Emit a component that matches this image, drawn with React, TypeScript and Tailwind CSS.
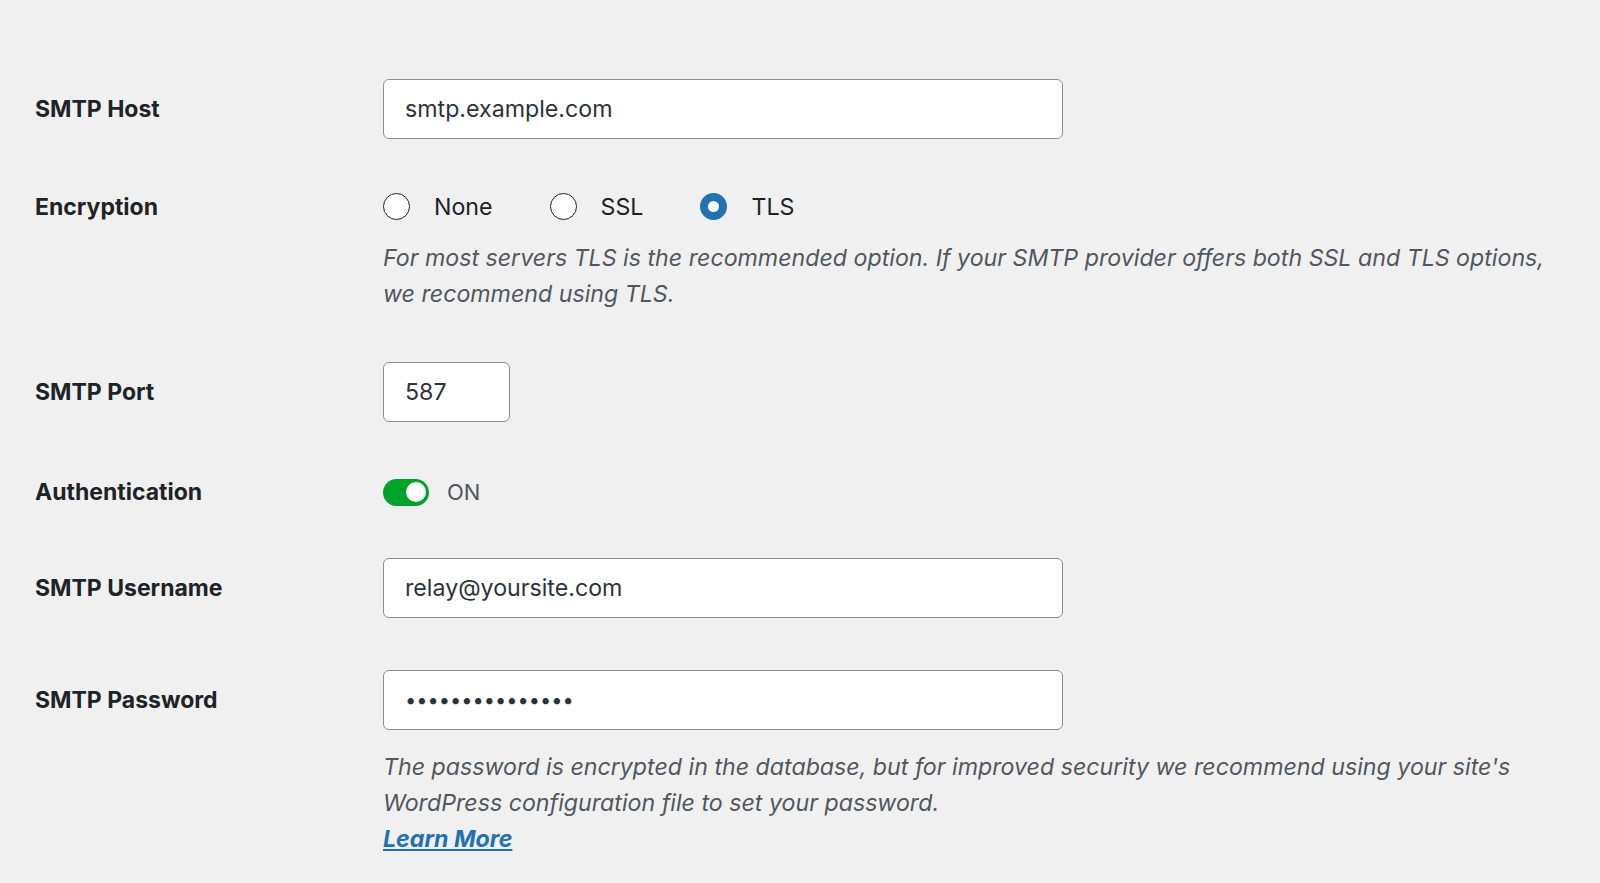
import { useState } from 'react';

type Enc = 'none' | 'ssl' | 'tls';

function Row({ label, children, labelClass = '' }: { label: string; children: React.ReactNode; labelClass?: string }) {
  return (
    <div className="flex">
      <div className={`w-[348px] shrink-0 text-[23px] font-bold text-[#1d2327] ${labelClass}`}>{label}</div>
      <div className="flex-1">{children}</div>
    </div>
  );
}

function Radio({ checked, label, onClick }: { checked: boolean; label: string; onClick: () => void }) {
  return (
    <button type="button" onClick={onClick} className="flex items-center gap-[24px]">
      {checked ? (
        <span className="w-[27px] h-[27px] rounded-full bg-[#2271b1] flex items-center justify-center">
          <span className="w-[11px] h-[11px] rounded-full bg-white" />
        </span>
      ) : (
        <span className="w-[27px] h-[27px] rounded-full bg-white border-[1.5px] border-[#1e1e1e]" />
      )}
      <span className="text-[23.2px] text-[#1d2327]">{label}</span>
    </button>
  );
}

export default function App() {
  const [enc, setEnc] = useState<Enc>('tls');
  const [auth, setAuth] = useState(true);

  const inputCls =
    'h-[60px] bg-white border-[1.5px] border-[#8c8f94] rounded-[6px] px-[21px] text-[23.2px] text-[#2c3338] outline-none';

  return (
    <div className="min-h-screen bg-[#f0f0f1] pt-[79px] pl-[35px]" style={{ fontFamily: 'Inter, "Noto Sans", sans-serif' }}>
      <div className="flex flex-col">
        <Row label="SMTP Host" labelClass="pt-[13px]">
          <input className={`${inputCls} w-[680px]`} defaultValue="smtp.example.com" />
        </Row>

        <div className="mt-[50px]">
          <Row label="Encryption" labelClass="leading-[36px]">
            <div className="flex items-center gap-[57px] h-[36px]">
              <Radio checked={enc === 'none'} label="None" onClick={() => setEnc('none')} />
              <Radio checked={enc === 'ssl'} label="SSL" onClick={() => setEnc('ssl')} />
              <Radio checked={enc === 'tls'} label="TLS" onClick={() => setEnc('tls')} />
            </div>
            <p className="mt-[15px] w-[1185px] text-[23.2px] leading-[36px] italic text-[#50575e]">
              For most servers TLS is the recommended option. If your SMTP provider offers both SSL and TLS options,
              we recommend using TLS.
            </p>
          </Row>
        </div>

        <div className="mt-[50px]">
          <Row label="SMTP Port" labelClass="pt-[13px]">
            <input className={`${inputCls} w-[127px]`} defaultValue="587" />
          </Row>
        </div>

        <div className="mt-[52px]">
          <Row label="Authentication" labelClass="leading-[36px]">
            <div className="flex items-center gap-[18px] h-[36px]">
              <button
                type="button"
                onClick={() => setAuth(!auth)}
                className={`w-[46px] h-[27px] rounded-full p-[3.5px] flex ${auth ? 'bg-[#00a32a] justify-end' : 'bg-[#8c8f94] justify-start'}`}
              >
                <span className="w-[20px] h-[20px] rounded-full bg-white" />
              </button>
              <span className="text-[22px] text-[#50575e]">{auth ? 'ON' : 'OFF'}</span>
            </div>
          </Row>
        </div>

        <div className="mt-[48px]">
          <Row label="SMTP Username" labelClass="pt-[13px]">
            <input className={`${inputCls} w-[680px]`} defaultValue="relay@yoursite.com" />
          </Row>
        </div>

        <div className="mt-[52px]">
          <Row label="SMTP Password" labelClass="pt-[13px]">
            <input type="password" className={`${inputCls} w-[680px] !text-[20px]`} defaultValue="passwordpasswor" />
            <p className="mt-[19px] w-[1185px] text-[23.2px] leading-[36px] italic text-[#50575e]">
              The password is encrypted in the database, but for improved security we recommend using your site's
              WordPress configuration file to set your password.
            </p>
            <a href="#" className="text-[23.2px] leading-[36px] italic font-bold text-[#2271b1] underline">
              Learn More
            </a>
          </Row>
        </div>
      </div>
    </div>
  );
}
